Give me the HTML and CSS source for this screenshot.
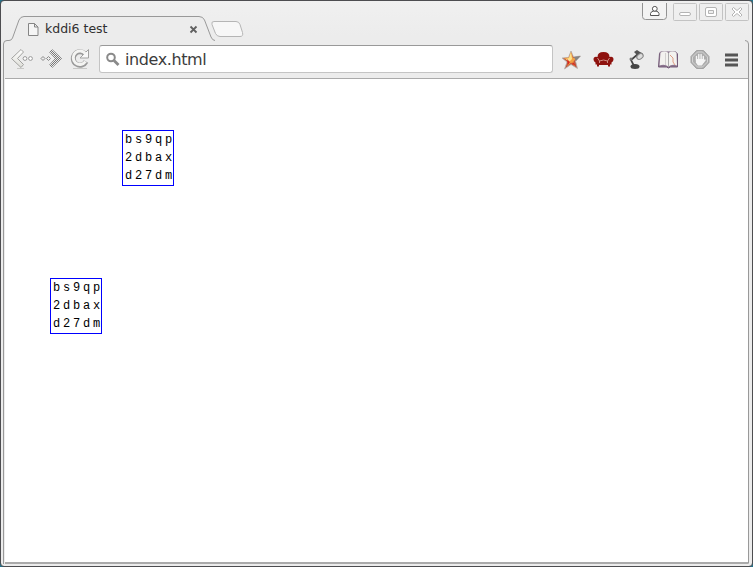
FILE: index.html
```html
<!DOCTYPE html>
<html lang="en">
<head>
<meta charset="utf-8">
<title>kddi6 test</title>
<link rel="stylesheet" href="styles.css">
</head>
<body>
<div class="window">
  <svg class="frame" width="753" height="567" viewBox="0 0 753 567" fill="none">
    <defs>
      <linearGradient id="metal" x1="0" y1="0" x2="0" y2="1"><stop offset="0" stop-color="#fff"/><stop offset="1" stop-color="#deded8"/></linearGradient>
      <pattern id="checks" width="2" height="2" patternUnits="userSpaceOnUse"><path d="M0 0h1v1H0ZM1 1h1v1H1Z" fill="#777"/></pattern>
    </defs>
    <path d="M4 564V44q0-3.500 3-3.500h2q2.500 0 3.500-2.500L19 20q1.500-3.500 5-3.500h175q4 0 5.500 3.500l6.500 17q1.500 3.500 4 3.500h530q3.500 0 3.500 3.500v520" fill="#ececec"/>
    <path d="M3.500 564V44q0-3.500 3.500-3.500h2q2.500 0 3.500-2.500L19 20q1.500-3.500 5-3.500h175q4 0 5.500 3.500l6.500 17q1.500 3.500 4 3.500M745 40.500q3.500 0 3.500 3.500v519.500" stroke="#999"/>
    <path d="M214 21.500h22q3 0 4 3l2.500 8q1 4-2.500 4h-20q-3 0-4.500-3l-3.500-9q-1-3 2-3Z" fill="#f7f7f7" stroke="#b5b5b5"/>
  </svg>
  <header class="tabs">
    <div class="tab">
      <svg width="13" height="15" viewBox="0 0 13 15" fill="#f5f5f5" stroke="#858585"><path d="M1.500 1.500h6l3.500 3.500v8.500h-9.500ZM7.500 1.500V5H11"/></svg>
      <span class="title">kddi6 test</span>
      <svg class="close" width="9" height="9" viewBox="0 0 9 9" stroke="#606060" stroke-width="1.800"><path d="m1.500 1.500 6 6M7.500 1.500l-6 6"/></svg>
    </div>
    <div class="controls">
      <svg width="112" height="24" viewBox="0 0 112 24" fill="none">
        <path d="M.500 0v13.500q0 3 3 3h18q3 0 3-3V0" fill="#f3f3f3" stroke="#939393"/>
        <path d="M8.500 12.500v-2q.5-2 3-2.500h2.500q2.500.500 3 2.500v2Z" fill="#fff" stroke="#555"/><circle cx="12.800" cy="5.800" r="2.400" fill="#fff" stroke="#555"/>
        <g stroke="#c3c3c3"><rect x="31.500" y=".5" width="23" height="17" rx="1"/><rect x="57.500" y=".5" width="23" height="17" rx="1"/><rect x="83.500" y=".5" width="23" height="17" rx="1"/></g>
        <g fill="#fff" stroke="#b4b4b4"><rect x="37.500" y="9.500" width="11" height="3" rx="1.500"/><path fill-rule="evenodd" d="M65 4.500h8q1.500 0 1.500 1.500v6q0 1.500-1.500 1.500h-8q-1.500 0-1.500-1.500V6q0-1.500 1.500-1.500ZM66.500 7.500v3h5v-3Z"/><path d="m91.500 4.500 3.500 3 3.500-3 1.500 1.500-3 3 3 3-1.500 1.500-3.500-3-3.500 3L90 12l3-3-3-3Z"/></g>
      </svg>
    </div>
  </header>
  <nav class="toolbar">
    <svg class="navicons" width="84" height="24" viewBox="0 0 84 24" fill="none">
      <path d="M7 21.500h7M63 21.500h14" stroke="#c8c8c6"/>
      <path d="m1.500 11.500 9.500-9 2.500 2.500-6 6.500 6 6-2.500 3Z" fill="url(#metal)" stroke="#a2a2a0"/>
      <g stroke="#999"><circle cx="15" cy="11.500" r="1.900" fill="#fff"/><circle cx="20.500" cy="11.500" r="1.900" fill="#fff"/></g>
      <g stroke="#888"><path d="m31 11.500 2-2 2 2-2 2ZM36.500 11.500l2-2 2 2-2 2Z"/></g>
      <path d="m39 5 3-3 10 9.500L42 21l-3-3 6-6.500Z" fill="url(#checks)"/>
      <path d="M75 7A6.700 6.700 0 1 0 76 14.500" stroke="#999" stroke-width="5"/><path d="M78.500 2.500v8.500H70l3-3 2-2Z" fill="#f8f8f8" stroke="#a2a2a0"/>
      <path d="M75.500 7A6.700 6.700 0 1 0 75.500 14.500" stroke="#f4f4f2" stroke-width="3"/>
    </svg>
    <div class="address">
      <svg width="15" height="15" viewBox="0 0 15 15" fill="none" stroke="#8a8a8a" stroke-width="2"><circle cx="5" cy="5.500" r="3.800"/><path d="m8 8.500 4.500 4.500" stroke-width="2.800"/></svg>
      <span>index.html</span>
    </div>
    <svg class="extensions" width="180" height="22" viewBox="0 0 180 22" fill="none">
      <path d="m10 2 2.500 6 7-1-5 5 2 7.500-6.500-4-6.500 4.500 2.500-7-5-4 6.500-.5Z" fill="#bf5640" stroke="#b5b2ad" stroke-width=".8"/>
      <path d="m10 3 2 6 4-.5-3.500 4 1.500 5-4-4-3.500 4 1-5L3 9l5-.5Z" fill="#f1a044"/><path d="m10 3 1 7-3 3-3-3 3-1Z" fill="#fbe28d"/><path d="m13 8 6.500-1-4.500 5Z" fill="#858585"/><path d="m6 10 3 3-2 3ZM12 13l3 4-4-2Z" fill="#d72920"/>
      <path d="M36.500 8q0-5 6-5t6 5q4-1 4 2.500 0 2-2 3v2h-1.500v2h-2v-1.500h-9v1.500h-2v-2h-1.500v-2q-2-1-2-3Q32.500 7 36.500 8Z" fill="#8e120e"/>
      <path d="m36.500 9 2 3v2M48.500 9l-2 3v2M38.500 12q4-2 8 0" stroke="#dcaaa0" stroke-width=".8"/>
      <ellipse cx="74" cy="17.500" rx="4.500" ry="2.500" fill="#454545"/><path d="m73 17-3-6 7-6" stroke="#444" stroke-width="1.700"/><circle cx="70" cy="10" r="1.500" fill="#777"/><path d="m73 3 3-2 3 2q4 1 3 4l-4 3q-3 0-3-5Z" fill="#555"/><ellipse cx="79" cy="7.500" rx="3.500" ry="2.500" transform="rotate(-38 79 7.500)" fill="#ddd" stroke="#888"/>
      <path d="M98.500 4.500 99.500 3h15.500l1.500 2v13h-7l-2 1-2-1h-8Z" fill="#8b748e" stroke="#755c79"/>
      <path d="M98.500 16.500 99.500 3.500q5-2 8 .5 3-2.500 8-.5l.5 13q-5-2-8.500 1-4-3-9-1Z" fill="#f3f2ef"/><path d="M107.500 4v14" stroke="#aaa"/><path d="M104.500 4v12" stroke="#d2d0cf"/><path d="m109 6 3 3v4l2 3" stroke="#df9c83"/>
      <path d="M135.500 1.500h7l5.500 6v6l-5.500 6h-7l-5.500-6v-6Z" fill="#adadad" stroke="#a2a2a2"/><path d="M136.500 3h5l5 5v5l-5 5h-5l-5-5V8Z" stroke="#d4d4d4"/>
      <path d="M135.500 11V7.500M137.800 11V5.500M140.100 11V5.500M142.300 11V7.500M142.500 13l1.500-2" stroke="#f5f5f5" stroke-width="1.400" stroke-linecap="round"/><path d="M134.900 10h8v3.500l-2 3h-4l-2-3Z" fill="#f5f5f5"/>
      <path d="M164 6h13M164 11h13M164 16h13" stroke="#555" stroke-width="3"/>
    </svg>
  </nav>
  <main class="page">
    <div class="code first"><i>b</i><i>s</i><i>9</i><i>q</i><i>p</i><i>2</i><i>d</i><i>b</i><i>a</i><i>x</i><i>d</i><i>2</i><i>7</i><i>d</i><i>m</i></div>
    <div class="code second"><i>b</i><i>s</i><i>9</i><i>q</i><i>p</i><i>2</i><i>d</i><i>b</i><i>a</i><i>x</i><i>d</i><i>2</i><i>7</i><i>d</i><i>m</i></div>
  </main>
</div>
</body>
</html>
```
FILE: styles.css
```css
* { box-sizing: border-box; }
body { margin: 0; overflow: hidden; background: #25738c; font-family: "DejaVu Sans", sans-serif; }
.window { width: 753px; height: 567px; display: flex; flex-direction: column; background: linear-gradient(#f0f0f0, #ececec 35px); border-radius: 4px; border: 1px solid #4d4d50; padding: 0 4px 2px; isolation: isolate; }
.frame { position: absolute; inset: 0; z-index: -1; }
.tabs { height: 39px; flex: none; display: flex; justify-content: space-between; }
.tab { width: 200px; height: 24px; margin: 16px 0 0 22px; display: flex; align-items: center; color: #303030; }
.title { margin-left: 5px; font-size: 12.5px; line-height: 22px; }
.close { margin-left: auto; margin-right: 29px; }
.controls { width: 112px; padding-top: 2px; margin-right: -6px; }
.toolbar { height: 39px; border-bottom: 1px solid #aaa; display: flex; flex: none; align-items: center; padding-left: 5px; }
.navicons { flex: none; }
.address { width: 454px; height: 28px; margin-left: 5px; flex: none; display: flex; align-items: center; padding-left: 6px; border: 1px solid #c4c4c4; border-top-color: #999; border-radius: 3px; background: #fff; color: #3c3c3c; font-size: 16px; letter-spacing: -0.4px; }
.address span { margin-left: 4px; }
.extensions { flex: none; margin: 2px 0 0 8px; }
.page { flex: 1; padding: 51px 0 0; background: #fff; border-bottom: 2px solid #aaa; }
.code { width: 52px; height: 56px; padding-left: 0.5px; border: 1px solid #00f; display: grid; grid-template-columns: repeat(5, 10px); grid-auto-rows: 18px; font: 12px/18px "Liberation Mono", monospace; color: #000; text-align: center; }
.code i { font-style: normal; }
.first { margin-left: 117px; }
.second { margin: 92px 0 0 45px; }
```
